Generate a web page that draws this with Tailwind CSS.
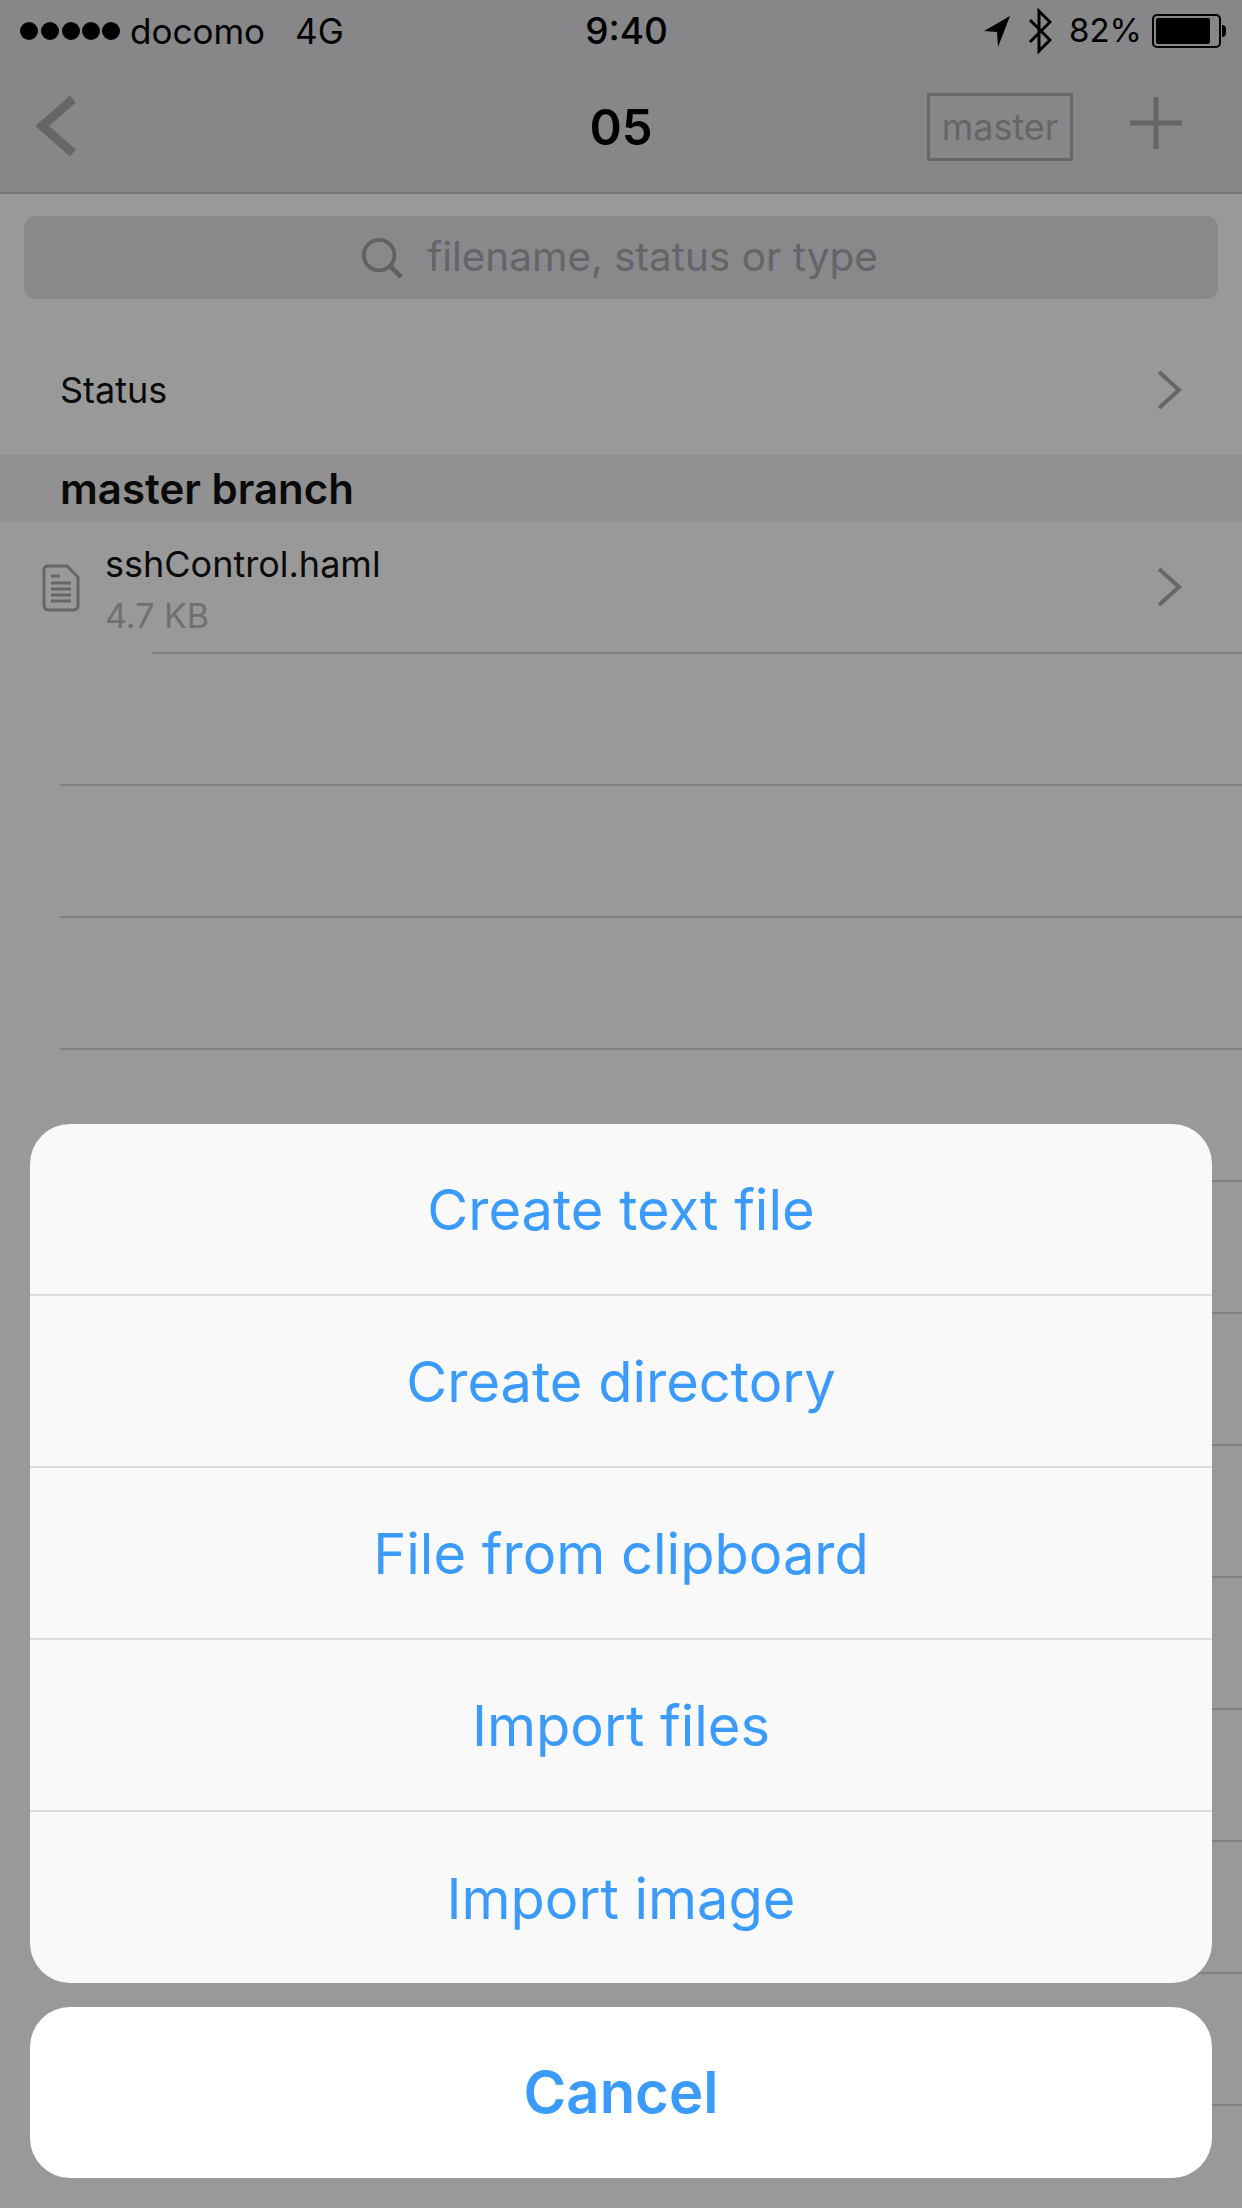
<!DOCTYPE html>
<html lang="en">
<head>
    <meta charset="UTF-8">
    <meta name="viewport" content="width=device-width, initial-scale=1.0">
    <title>05</title>
    <script src="https://cdn.jsdelivr.net/npm/@tailwindcss/browser@4"></script>
</head>
<body class="bg-white">
<div class="relative w-[1242px] h-[2208px] overflow-hidden bg-white font-['Inter','Liberation_Sans',sans-serif] text-black">

    <!-- nav -->
    <header class="h-[194px] bg-[#e1e1e5] border-b-2 border-[#c8c8cc]">
        <div class="h-[62px] grid grid-cols-3 items-center pl-[19px] pr-[16px] text-[33px]">
            <div class="flex items-center">
                <svg width="102" height="20" viewBox="0 0 102 20" class="fill-black">
                    <circle cx="10" cy="10" r="9"/><circle cx="31" cy="10" r="9"/><circle cx="52" cy="10" r="9"/><circle cx="72" cy="10" r="9"/><circle cx="92" cy="10" r="9"/>
                </svg>
                <span class="ml-[9px] text-[35px]">docomo</span>
                <span class="ml-[30px] text-[35px]">4G</span>
            </div>
            <div class="pl-[8px] text-center text-[37px] font-medium">9:40</div>
            <div class="flex items-center justify-end">
                <svg width="28" height="32" viewBox="0 0 28 32" class="fill-black"><path d="M27 1 L1 16 L14 17 L15 32 Z"/></svg>
                <svg width="24" height="48" viewBox="0 0 24 48" class="ml-[17px] fill-none stroke-black stroke-[3]"><path d="M2 13 L22 33 L11 44 L11 4 L22 15 L2 35"/></svg>
                <span class="ml-[17px]">82%</span>
                <div class="ml-[10px] flex items-center">
                    <div class="w-[69px] h-[34px] border-2 border-black rounded-[5px] p-[2px]">
                        <div class="h-full w-[54px] bg-black rounded-[2px]"></div>
                    </div>
                    <div class="w-[4px] h-[12px] bg-black rounded-r-full ml-[1px]"></div>
                </div>
            </div>
        </div>
        <div class="relative h-[130px] flex items-center pl-[36px] pr-[60px]">
            <svg width="40" height="60" viewBox="0 0 40 60" class="-mt-[3px] fill-none stroke-[#aaaaaa] stroke-[9]"><path d="M37 3 L6 30 L37 57" /></svg>
            <div class="absolute inset-x-0 top-[29px] text-center text-[49px] font-semibold">05</div>
            <div class="ml-auto w-[146px] h-[68px] border-[3px] border-[#aaaaaa] flex items-center justify-center text-[36px] text-[#aaaaaa]">master</div>
            <svg width="52" height="52" viewBox="0 0 52 52" class="ml-[57px] -mt-[8px] stroke-[#aaaaaa] stroke-[5]"><path d="M26 0 V52 M0 26 H52" /></svg>
        </div>
    </header>

    <!-- search -->
    <div class="px-[24px] pt-[22px]">
        <div class="h-[83px] pr-[3px] rounded-[12px] bg-[#e3e4e8] flex items-center justify-center text-[40.5px] text-[#a8a8ac]">
            <svg width="42" height="42" viewBox="0 0 44 44" class="fill-none stroke-[#a2a2a6] stroke-[4]"><circle cx="19" cy="19" r="16"/><path d="M30 30 L42 42" stroke-width="5"/></svg>
            <span class="ml-[24px]">filename, status or type</span>
        </div>
    </div>

    <div class="h-[156px] flex items-center pt-[26px] pl-[60px] pr-[60px] text-[36px] text-[#111]">
        <span>Status</span>
        <svg width="26" height="40" viewBox="0 0 26 40" class="ml-auto fill-none stroke-[#aaaaaa] stroke-[4]"><path d="M3 2 L23 20 L3 38"/></svg>
    </div>

    <div class="h-[67px] bg-[#f2f2f2] flex items-center pl-[60px] text-[42px] font-semibold text-[#111]">master branch</div>

    <!-- rows -->
    <div class="relative h-[132px] flex items-center pl-[42px] pr-[60px]">
        <svg width="38" height="48" viewBox="0 0 38 48" class="fill-none stroke-[#aaaaaa] stroke-[3]">
            <path d="M6 2 H25 L36 13 V41 Q36 46 31 46 H7 Q2 46 2 41 V6 Q2 2 6 2 Z"/>
            <path d="M9 12 H18 M9 19 H29 M9 25 H29 M9 31 H29 M9 37 H29"/>
        </svg>
        <div class="ml-[25px]">
            <div class="mt-[2px] text-[36px] leading-[40px] text-[#111]">sshControl.haml</div>
            <div class="mt-[14px] text-[34px] leading-[36px] text-[#bbbbbb]">4.7 KB</div>
        </div>
        <svg width="26" height="40" viewBox="0 0 26 40" class="ml-auto -mt-[3px] fill-none stroke-[#aaaaaa] stroke-[4]"><path d="M3 2 L23 20 L3 38"/></svg>
        <div class="absolute left-[152px] right-0 bottom-0 h-[2px] bg-[#d5d5d5]"></div>
    </div>
    <div class="pl-[60px]">
        <div class="h-[132px] border-b-2 border-[#d5d5d5]"></div>
        <div class="h-[132px] border-b-2 border-[#d5d5d5]"></div>
        <div class="h-[132px] border-b-2 border-[#d5d5d5]"></div>
        <div class="h-[132px] border-b-2 border-[#d5d5d5]"></div>
        <div class="h-[132px] border-b-2 border-[#d5d5d5]"></div>
        <div class="h-[132px] border-b-2 border-[#d5d5d5]"></div>
        <div class="h-[132px] border-b-2 border-[#d5d5d5]"></div>
        <div class="h-[132px] border-b-2 border-[#d5d5d5]"></div>
        <div class="h-[132px] border-b-2 border-[#d5d5d5]"></div>
        <div class="h-[132px] border-b-2 border-[#d5d5d5]"></div>
        <div class="h-[132px] border-b-2 border-[#d5d5d5]"></div>
    </div>

    <!-- action sheet -->
    <div class="absolute inset-0 bg-black/40 flex flex-col justify-end px-[30px] pb-[30px]">
        <div class="rounded-[40px] bg-[#f9f9f9] overflow-hidden divide-y-2 divide-[#dcdcdc] text-[56px] text-[#3a9bfc] text-center">
            <div class="h-[172px] pt-[2px] flex items-center justify-center">Create text file</div>
            <div class="h-[172px] pt-[2px] flex items-center justify-center">Create directory</div>
            <div class="h-[172px] pt-[2px] flex items-center justify-center">File from clipboard</div>
            <div class="h-[172px] pt-[2px] flex items-center justify-center">Import files</div>
            <div class="h-[171px] pt-[2px] flex items-center justify-center">Import image</div>
        </div>
        <div class="mt-[24px] h-[171px] rounded-[40px] bg-white flex items-center justify-center text-[58px] font-semibold text-[#3a9bfc]">Cancel</div>
    </div>
</div>
</body>
</html>
